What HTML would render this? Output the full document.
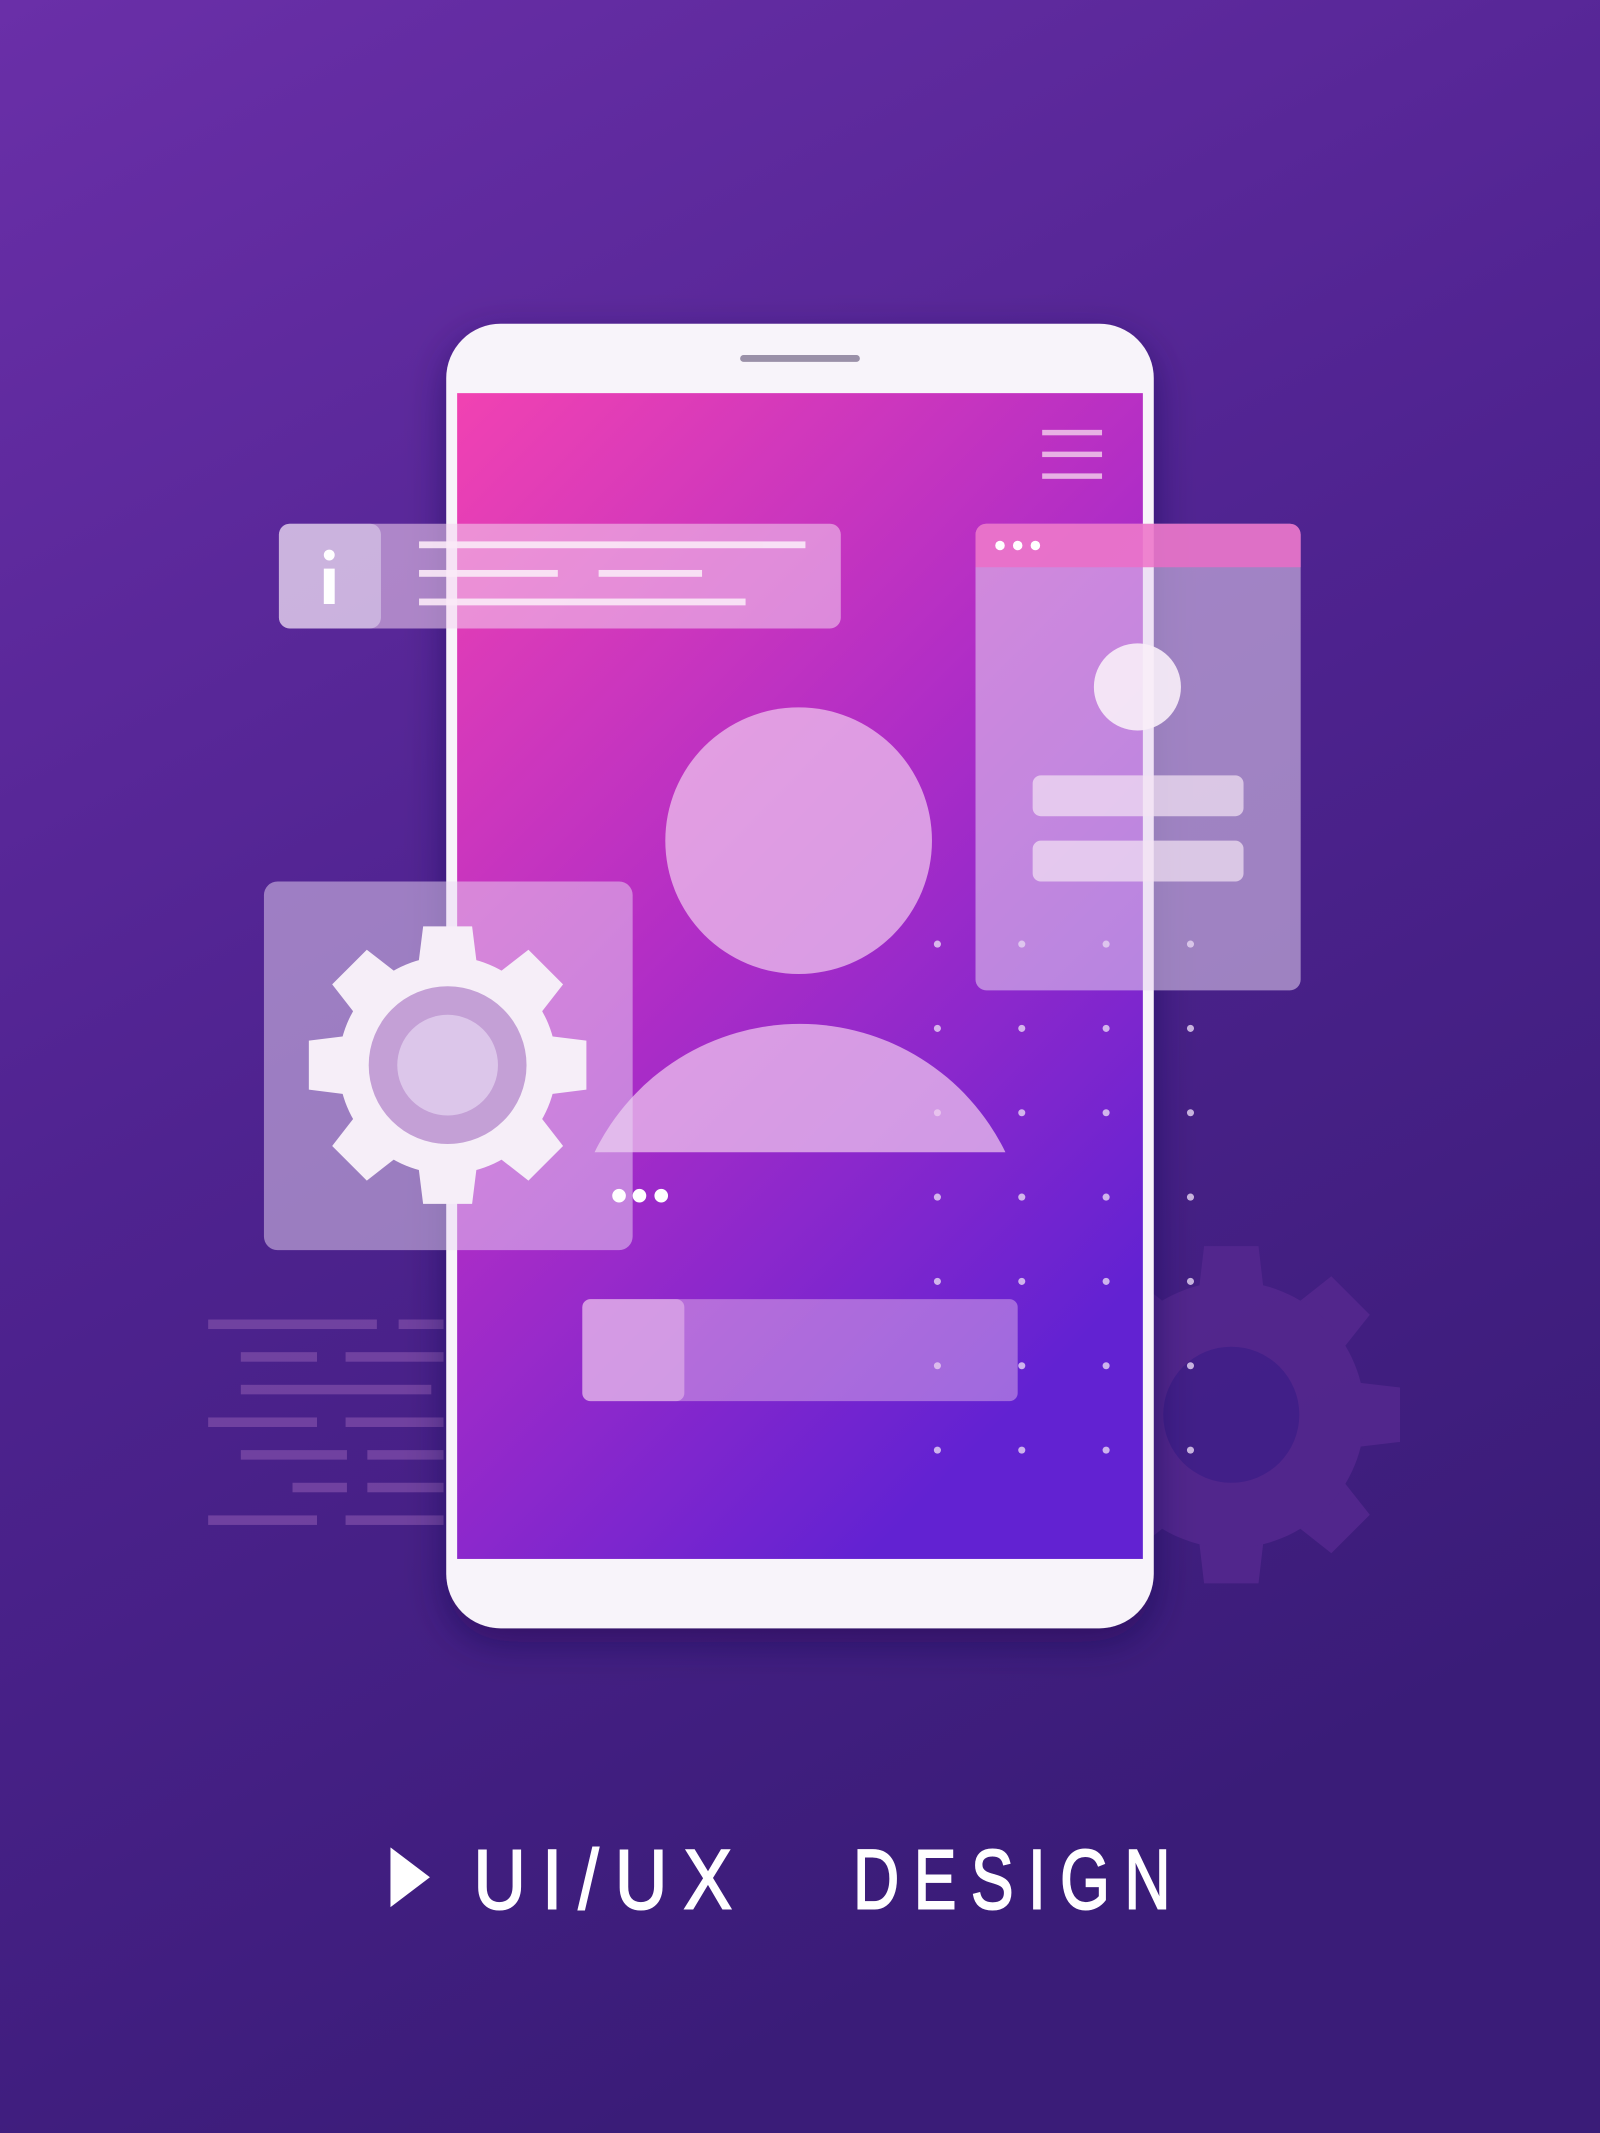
<!DOCTYPE html>
<html><head><meta charset="utf-8"><style>html,body{margin:0;padding:0;width:1600px;height:2133px;overflow:hidden}svg{display:block}</style></head><body>
<svg width="1600" height="2133" viewBox="0 0 1176 1568" preserveAspectRatio="none" xmlns="http://www.w3.org/2000/svg">
<defs>
<linearGradient id="bg" x1="0" y1="0" x2="0.4" y2="1"><stop offset="0" stop-color="#6a2fa8"/><stop offset="0.5" stop-color="#4f2390"/><stop offset="1" stop-color="#3a1c78"/></linearGradient>
<linearGradient id="scr" x1="0" y1="0" x2="0.6" y2="1"><stop offset="0" stop-color="#f142b2"/><stop offset="0.5" stop-color="#b02dc6"/><stop offset="1" stop-color="#6222d2"/></linearGradient>
<filter id="sh" x="-20%" y="-20%" width="140%" height="140%"><feDropShadow dx="0" dy="10" stdDeviation="14" flood-color="#1a0640" flood-opacity="0.45"/></filter>
</defs>
<rect width="1176" height="1568" fill="url(#bg)"/>
<g transform="translate(905,1040)" fill="#55288f" opacity="0.85">
<g id="bt"><path d="M-20 -124 H20 L24 -90 H-24 Z"/></g>
<use href="#bt" transform="rotate(45)"/><use href="#bt" transform="rotate(90)"/><use href="#bt" transform="rotate(135)"/><use href="#bt" transform="rotate(180)"/><use href="#bt" transform="rotate(225)"/><use href="#bt" transform="rotate(270)"/><use href="#bt" transform="rotate(315)"/>
<circle r="98"/>
<circle r="50" fill="#42208a"/>
</g>
<g fill="#7a4aa6" opacity="0.8">
<rect x="153" y="970" width="124" height="7"/><rect x="293" y="970" width="33" height="7"/>
<rect x="177" y="994" width="56" height="7"/><rect x="254" y="994" width="72" height="7"/>
<rect x="177" y="1018" width="140" height="7"/>
<rect x="153" y="1042" width="80" height="7"/><rect x="254" y="1042" width="72" height="7"/>
<rect x="177" y="1066" width="78" height="7"/><rect x="270" y="1066" width="56" height="7"/>
<rect x="215" y="1090" width="40" height="7"/><rect x="270" y="1090" width="56" height="7"/>
<rect x="153" y="1114" width="80" height="7"/><rect x="254" y="1114" width="72" height="7"/>
</g>
<rect x="328" y="238" width="520" height="959" rx="40" fill="#f8f4fa" filter="url(#sh)"/>
<rect x="544" y="261" width="88" height="5" rx="2.5" fill="#9a90a8"/>
<rect x="336" y="289" width="504" height="857" fill="url(#scr)"/>
<g fill="#f0c8ea" opacity="0.85"><rect x="766" y="316" width="44" height="4"/><rect x="766" y="332" width="44" height="4"/><rect x="766" y="348" width="44" height="4"/></g>
<g fill="#e8d8f4" opacity="0.8">
<g id="row"><circle cx="689" cy="694" r="2.6"/><circle cx="751" cy="694" r="2.6"/><circle cx="813" cy="694" r="2.6"/><circle cx="875" cy="694" r="2.6"/></g>
<use href="#row" y="62"/><use href="#row" y="124"/><use href="#row" y="186"/><use href="#row" y="248"/><use href="#row" y="310"/><use href="#row" y="372"/>
</g>
<circle cx="587" cy="618" r="98" fill="#f0c8ee" opacity="0.72"/>
<path d="M437 847 A168 168 0 0 1 739 847 Z" fill="#f0c8ee" opacity="0.72"/>
<rect x="428" y="955" width="320" height="75" rx="6" fill="#e8c0ee" opacity="0.45"/>
<rect x="428" y="955" width="75" height="75" rx="6" fill="#f0c8ee" opacity="0.5"/>
<rect x="205" y="385" width="413" height="77" rx="8" fill="#f4d4f0" opacity="0.55"/>
<rect x="205" y="385" width="75" height="77" rx="8" fill="#e8e0f4" opacity="0.5"/>
<g fill="#fff"><circle cx="242" cy="408" r="4"/><rect x="238" y="418" width="8" height="26"/></g>
<g fill="#fbeaf8" opacity="0.9"><rect x="308" y="398" width="284" height="5"/><rect x="308" y="419" width="102" height="5"/><rect x="440" y="419" width="76" height="5"/><rect x="308" y="440" width="240" height="5"/></g>
<rect x="717" y="385" width="239" height="343" rx="8" fill="#e6d4f0" opacity="0.55"/>
<path d="M725 385 H948 A8 8 0 0 1 956 393 V417 H717 V393 A8 8 0 0 1 725 385Z" fill="#ee6cc6" opacity="0.8"/>
<g fill="#fff"><circle cx="735" cy="401" r="3.5"/><circle cx="748" cy="401" r="3.5"/><circle cx="761" cy="401" r="3.5"/></g>
<circle cx="836" cy="505" r="32" fill="#f8eef8" opacity="0.9"/>
<rect x="759" y="570" width="155" height="30" rx="6" fill="#f4e4f4" opacity="0.7"/>
<rect x="759" y="618" width="155" height="30" rx="6" fill="#f4e4f4" opacity="0.7"/>
<rect x="194" y="648" width="271" height="271" rx="10" fill="#ead8f4" opacity="0.5"/>
<g transform="translate(329,783)" fill="#f6eef8">
<g id="gt"><path d="M-18 -102 H18 L22 -70 H-22 Z"/></g>
<use href="#gt" transform="rotate(45)"/><use href="#gt" transform="rotate(90)"/><use href="#gt" transform="rotate(135)"/><use href="#gt" transform="rotate(180)"/><use href="#gt" transform="rotate(225)"/><use href="#gt" transform="rotate(270)"/><use href="#gt" transform="rotate(315)"/>
<circle r="80"/>
<circle r="58" fill="#c4a0d6"/>
<circle r="37" fill="#dcc6ea"/>
</g>
<g fill="#fff"><circle cx="455" cy="879" r="5"/><circle cx="470" cy="879" r="5"/><circle cx="486" cy="879" r="5"/></g>
<path d="M287 1358 L316 1380 L287 1402 Z" fill="#fff"/>
<text x="348" y="1403" fill="#fff" stroke="#fff" stroke-width="1.5" font-family="Liberation Sans Narrow, Liberation Sans, sans-serif" font-size="62" textLength="202" lengthAdjust="spacingAndGlyphs" letter-spacing="14">UI/UX</text>
<text x="627" y="1403" fill="#fff" stroke="#fff" stroke-width="1.5" font-family="Liberation Sans Narrow, Liberation Sans, sans-serif" font-size="62" textLength="244" lengthAdjust="spacingAndGlyphs" letter-spacing="14">DESIGN</text>
</svg>
</body></html>
